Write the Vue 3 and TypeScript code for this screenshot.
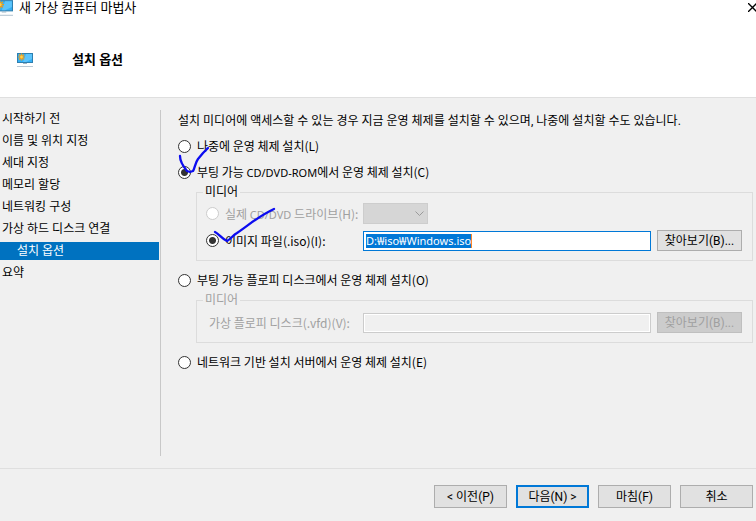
<script setup lang="ts">
import { ref } from 'vue'

const steps: string[] = [
  '시작하기 전',
  '이름 및 위치 지정',
  '세대 지정',
  '메모리 할당',
  '네트워킹 구성',
  '가상 하드 디스크 연결',
  '설치 옵션',
  '요약',
]
const current = 6
const mode = ref<string>('cd')
const source = ref<string>('iso')
const isoPath = ref<string>('D:₩iso₩Windows.iso')
</script>

<template>
  <div class="wizard">
    <svg class="defs" width="0" height="0" aria-hidden="true">
      <symbol id="monitor" viewBox="0 0 16 14">
        <rect x="0.5" y="0.5" width="15" height="9" fill="#35b0f5" stroke="#2d7fb0" />
        <path d="M9 1h6v5L9 9H6z" fill="#5cc4fb" />
        <path d="M4.5 0.5v7M1 4h7M2 1.5l5 5M7 1.5l-5 5" stroke="#eb9c1c" stroke-width="1.2" />
        <circle cx="4.5" cy="4" r="1.4" fill="#ffd04a" />
        <path d="M6 10.5h4" stroke="#9db4c4" />
        <path d="M0 13.5h16" stroke="#b9c8d4" />
      </symbol>
    </svg>
    <header class="head">
      <div class="titlebar">
        <svg class="title-icon" aria-hidden="true"><use href="#monitor" /></svg>
        <span class="title">새 가상 컴퓨터 마법사</span>
        <button class="close" type="button" aria-label="닫기">
          <svg width="9" height="9" viewBox="0 0 9 9" aria-hidden="true">
            <path d="M0 0l9 9M9 0l-9 9" stroke="#000" stroke-width="1.3" />
          </svg>
        </button>
      </div>
      <div class="heading">
        <svg class="page-icon" aria-hidden="true"><use href="#monitor" /></svg>
        <h1>설치 옵션</h1>
      </div>
    </header>

    <div class="body">
      <nav class="steps">
        <a v-for="(s, i) in steps" :key="s" href="#" :class="{ active: i === current }">{{ s }}</a>
      </nav>
      <main class="content">
        <p class="intro">설치 미디어에 액세스할 수 있는 경우 지금 운영 체제를 설치할 수 있으며, 나중에 설치할 수도 있습니다.</p>

        <label class="option"><input v-model="mode" type="radio" name="mode" value="later" />나중에 운영 체제 설치(L)</label>
        <label class="option"><input v-model="mode" type="radio" name="mode" value="cd" /><span>부팅 가능 <span class="latin">CD/DVD-ROM</span>에서 운영 체제 설치(C)</span></label>
        <fieldset class="group">
          <legend>미디어</legend>
          <div class="row">
            <label class="source off"><input v-model="source" type="radio" name="source" value="drive" disabled /><span>실제 <span class="latin">CD/DVD</span> 드라이브(H):</span></label>
            <div class="drop">
              <select disabled aria-label="실제 CD/DVD 드라이브"></select>
              <svg width="9" height="6" viewBox="0 0 9 6" aria-hidden="true">
                <path d="M0.5 0.5l4 4 4-4" fill="none" stroke="#9a9a9a" />
              </svg>
            </div>
          </div>
          <div class="row">
            <label class="source"><input v-model="source" type="radio" name="source" value="iso" />이미지 파일(.iso)(I):</label>
            <div class="path">
              <span class="selected">{{ isoPath }}</span>
              <input v-model="isoPath" type="text" aria-label="이미지 파일" />
            </div>
            <button class="browse" type="button">찾아보기(B)...</button>
          </div>
        </fieldset>

        <label class="option"><input v-model="mode" type="radio" name="mode" value="floppy" />부팅 가능 플로피 디스크에서 운영 체제 설치(O)</label>
        <fieldset class="group" disabled>
          <legend>미디어</legend>
          <div class="row">
            <label class="source text-only" for="vfd">가상 플로피 디스크(.vfd)(V):</label>
            <div class="path"><input id="vfd" type="text" disabled /></div>
            <button class="browse" type="button" disabled>찾아보기(B)...</button>
          </div>
        </fieldset>

        <label class="option"><input v-model="mode" type="radio" name="mode" value="network" />네트워크 기반 설치 서버에서 운영 체제 설치(E)</label>

        <svg class="ink" width="100" height="96" viewBox="0 0 100 96" aria-hidden="true">
          <path d="M2 10c0 5 2 9 7 15l3 1 3-1c2-3 2-8 5-12l5-6 5-5" />
          <path d="M37 86c4 2 6 6 12 9 4-2 6-6 10-8 12-8 20-16 37-24" />
        </svg>
      </main>
    </div>

    <footer class="foot">
      <button type="button">&lt; 이전(P)</button>
      <button type="button" class="primary">다음(N) &gt;</button>
      <button type="button">마침(F)</button>
      <button type="button">취소</button>
    </footer>
  </div>
</template>

<style>
body {
  margin: 0;
  background: #f0f0f0;
}
</style>

<style scoped>
.wizard {
  display: flex;
  flex-direction: column;
  min-height: 100vh;
  overflow: hidden;
  box-sizing: border-box;
  background: #f0f0f0;
  color: #000;
  font: 12px/16px Roboto, "Noto Sans CJK KR", sans-serif;
}
.defs {
  position: absolute;
}
button,
input,
select {
  box-sizing: border-box;
  margin: 0;
  font: inherit;
  color: inherit;
}
.head {
  height: 97px;
  background: #fff;
  border-bottom: 1px solid #dfdfdf;
}
.titlebar {
  display: flex;
  align-items: center;
  height: 15px;
}
.title-icon {
  width: 18px;
  height: 16px;
  margin-left: -5px;
}
.title {
  flex: 1;
  margin-left: 6px;
  font-size: 13px;
}
.close {
  width: 8px;
  height: 15px;
  padding: 0;
  border: 0;
  background: none;
  overflow: hidden;
}
.close svg {
  display: block;
}
.heading {
  display: flex;
  align-items: center;
  gap: 39px;
  padding: 36px 17px 0;
}
.page-icon {
  width: 16px;
  height: 14px;
}
h1 {
  margin: 0;
  font-size: 13px;
  line-height: 18px;
  font-weight: 700;
}
.body {
  display: flex;
  flex: 1;
  padding: 10px 0 12px;
}
.steps {
  display: flex;
  flex-direction: column;
  gap: 4px;
  width: 160px;
  padding-top: 2px;
}
.steps a {
  margin-right: 1px;
  padding: 0 2px;
  line-height: 18px;
  color: #000;
  text-decoration: none;
}
.steps a.active {
  padding-left: 17px;
  background: #0072c0;
  color: #fff;
}
.content {
  position: relative;
  flex: 1;
  min-width: 0;
  margin-top: 2px;
  padding: 3px 3px 0 17px;
  border-left: 1px solid #c8c8c8;
}
.intro {
  margin: 0 0 9px;
  white-space: nowrap;
}
.option,
.source {
  display: flex;
  align-items: center;
  gap: 6px;
  font-family: "Noto Sans CJK KR", sans-serif;
  white-space: nowrap;
}
.option {
  height: 16px;
  margin-bottom: 10px;
}
.option + .group {
  margin-top: -6px;
}
.latin {
  font-family: "Noto Sans", sans-serif;
  font-size: 11px;
  line-height: 1;
}
input[type='radio'] {
  flex: none;
  width: 13px;
  height: 13px;
  appearance: none;
  border: 1px solid #333;
  border-radius: 50%;
  background: #fff;
}
input[type='radio']:checked {
  background: radial-gradient(circle, #333 0 3px, #fff 4px);
}
input[type='radio']:disabled {
  border-color: #ccc;
}
.group {
  min-width: 0;
  margin: 0 0 11px 18px;
  padding: 3px 10px 9px 9px;
  border: 1px solid #dcdcdc;
}
.group legend {
  margin-left: -3px;
  padding: 0 2px;
}
.group:disabled {
  padding-top: 4px;
}
.group:disabled,
.off {
  color: #a0a0a0;
}
.row {
  display: flex;
  align-items: center;
  gap: 6px;
}
.row + .row {
  margin-top: 6px;
}
.source {
  width: 151px;
}
.text-only {
  box-sizing: border-box;
  padding-left: 3px;
}
.drop {
  position: relative;
  width: 65px;
  height: 21px;
}
.drop select {
  display: block;
  width: 100%;
  height: 100%;
  appearance: none;
  border: 1px solid #bfbfbf;
  border-radius: 0;
  background: #ccc;
}
.drop svg {
  position: absolute;
  right: 4px;
  top: 8px;
}
.path {
  position: relative;
  flex: 1;
  min-width: 0;
  height: 20px;
  font-family: "Noto Sans", "Noto Sans CJK KR", sans-serif;
  font-size: 11px;
}
.path input {
  display: block;
  width: 100%;
  height: 100%;
  padding: 0 2px;
  border: 1px solid #0078d7;
  outline: 0;
  background: #fff;
}
.path input:disabled {
  border-color: #ccc;
  background: #f0f0f0;
  box-shadow: inset 0 0 0 1px #fff;
}
.selected {
  position: absolute;
  top: 3px;
  left: 3px;
  height: 14px;
  line-height: 14px;
  border-right: 1px solid #ff8728;
  background: #0078d7;
  color: #fff;
  pointer-events: none;
}
.browse {
  width: 85px;
  height: 21px;
}
.browse,
.foot button {
  padding: 0;
  border: 1px solid #adadad;
  background: #e1e1e1;
  white-space: nowrap;
}
.browse:disabled {
  border-color: #bfbfbf;
  background: #ccc;
  color: #a0a0a0;
}
.ink {
  position: absolute;
  left: 17px;
  top: 36px;
  pointer-events: none;
}
.ink path {
  fill: none;
  stroke: #0c0cf0;
  stroke-width: 2.3;
  stroke-linecap: round;
  stroke-linejoin: round;
}
.foot {
  display: flex;
  justify-content: flex-end;
  gap: 9px;
  padding: 16px 3px 13px;
  border-top: 1px solid #dfdfdf;
}
.foot button {
  width: 73px;
  height: 23px;
}
.foot .primary {
  border: 2px solid #0078d7;
}
</style>
